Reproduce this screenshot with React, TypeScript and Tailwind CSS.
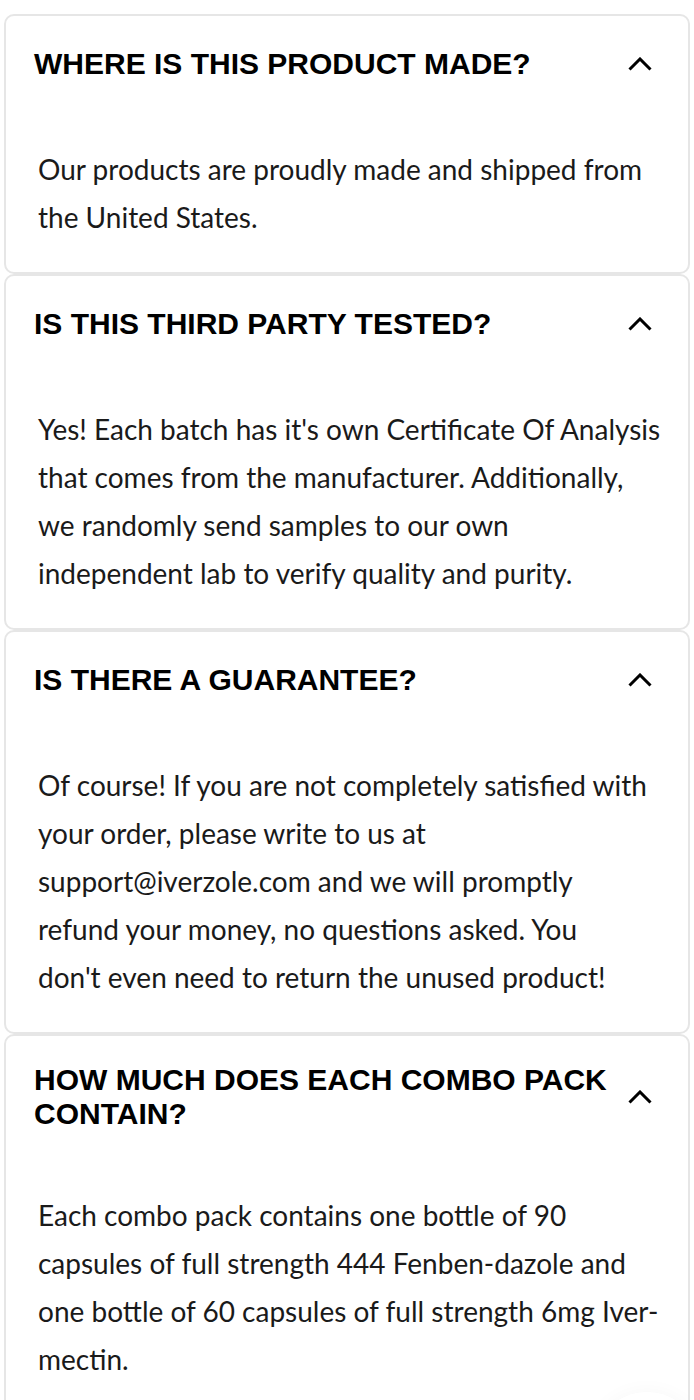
import React from "react";

const items: { q: string[]; a: string[] }[] = [
  {
    q: ["WHERE IS THIS PRODUCT MADE?"],
    a: ["Our products are proudly made and shipped from", "the United States."],
  },
  {
    q: ["IS THIS THIRD PARTY TESTED?"],
    a: [
      "Yes! Each batch has it's own Certificate Of Analysis",
      "that comes from the manufacturer. Additionally,",
      "we randomly send samples to our own",
      "independent lab to verify quality and purity.",
    ],
  },
  {
    q: ["IS THERE A GUARANTEE?"],
    a: [
      "Of course! If you are not completely satisfied with",
      "your order, please write to us at",
      "support@iverzole.com and we will promptly",
      "refund your money, no questions asked. You",
      "don't even need to return the unused product!",
    ],
  },
  {
    q: ["HOW MUCH DOES EACH COMBO PACK", "CONTAIN?"],
    a: [
      "Each combo pack contains one bottle of 90",
      "capsules of full strength 444 Fenben-dazole and",
      "one bottle of 60 capsules of full strength 6mg Iver-",
      "mectin.",
    ],
  },
];

function Chevron() {
  return (
    <svg width="24" height="14" viewBox="0 0 24 14" fill="none">
      <polyline
        points="1.5,12.5 12,2 22.5,12.5"
        stroke="#000"
        strokeWidth="3"
        strokeLinecap="butt"
        strokeLinejoin="miter"
      />
    </svg>
  );
}

export default function App() {
  return (
    <div className="relative w-[694px] h-[1400px] overflow-hidden bg-white pt-[14px]">
      {items.map((it, i) => (
        <div
          key={i}
          className="mx-[4px] border-2 border-[#e6e6e6] rounded-[10px] bg-white"
        >
          <div className="flex items-center pt-[27px] pl-[28px] pr-[27px]">
            <h3
              className="flex-1 text-[30px] leading-[34px] font-bold text-black"
              style={{ fontFamily: '"Liberation Sans", Arial, sans-serif' }}
            >
              {it.q.map((l, j) => (
                <div key={j} className="whitespace-nowrap">
                  {l}
                </div>
              ))}
            </h3>
            <div className="w-[42px] h-[42px] flex items-center justify-center shrink-0">
              <Chevron />
            </div>
          </div>
          <div
            className="pt-[60px] pb-[31px] pl-[32px] pr-[20px] text-[28px] leading-[48px] text-[#1a1a1a]"
            style={{ fontFamily: 'Lato, "Noto Sans", sans-serif' }}
          >
            {it.a.map((l, j) => (
              <div key={j} className="whitespace-nowrap">
                {l}
              </div>
            ))}
          </div>
        </div>
      ))}
      <div className="absolute left-[592px] top-[1392px] w-[110px] h-[110px] rounded-full bg-white shadow-[0_0_20px_rgba(0,0,0,0.035)]" />
    </div>
  );
}
